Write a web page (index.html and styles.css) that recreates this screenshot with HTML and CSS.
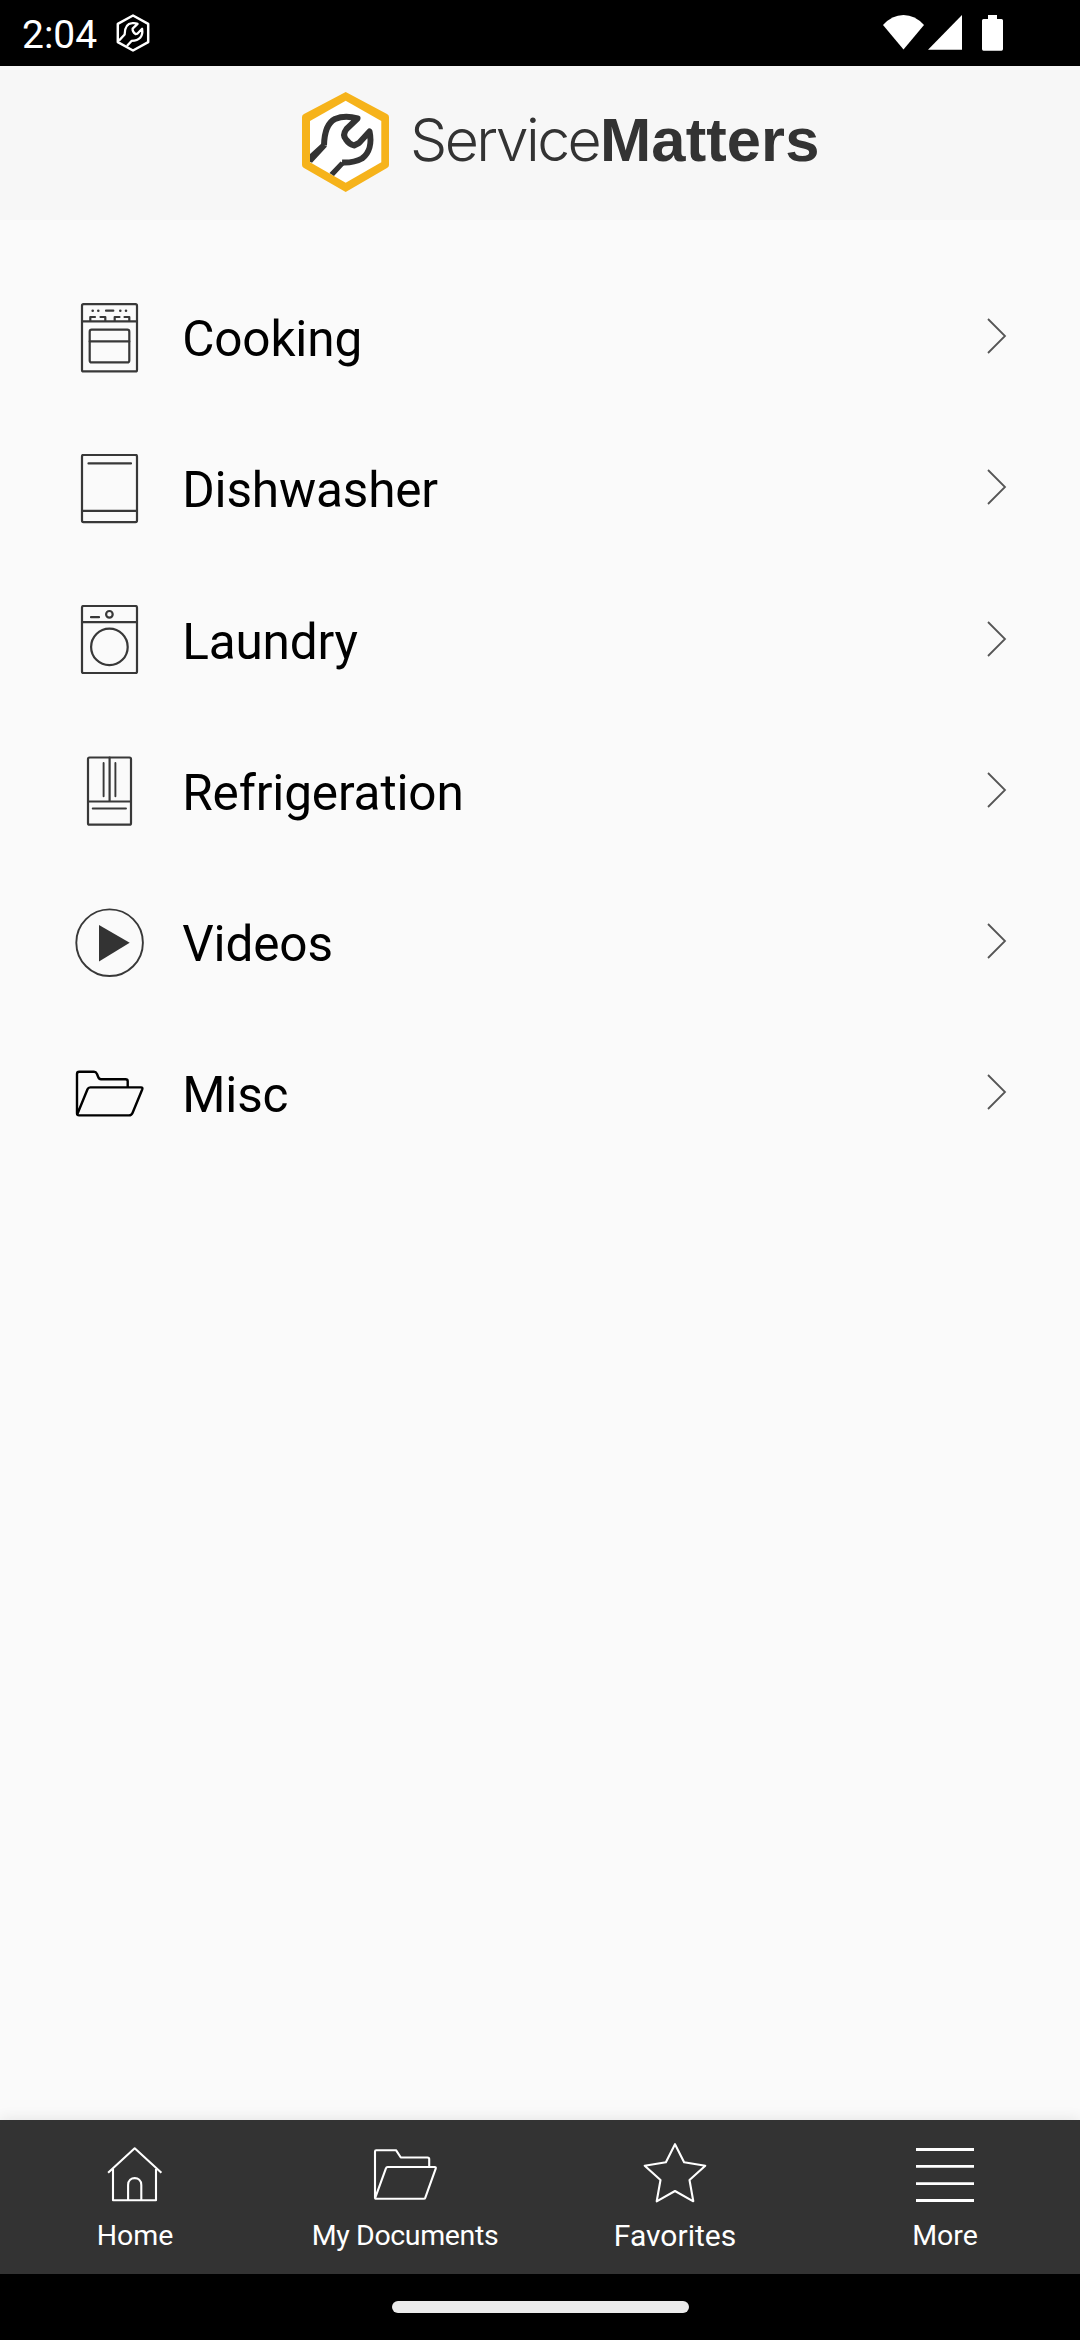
FILE: index.html
```html
<!DOCTYPE html>
<html lang="en">
<head>
<meta charset="utf-8">
<title>ServiceMatters</title>
<link rel="stylesheet" href="styles.css">
</head>
<body>
<div class="app">
  <div class="status">
    <span class="time">2:04</span>
    <svg class="status-logo" viewBox="0 0 88 100" fill="none" stroke="#fff" stroke-width="6.5" stroke-linejoin="round">
      <path d="M44 4 84 26V74L44 96 4 74V26Z"/>
      <path d="M7 70 22 54C22 38 28 25 42 24Q50 23 56 26L43 38.500Q42 47 50.700 53L56 51.500 68 39C71 58 62 70 40 71L28 84" stroke-width="6"/>
    </svg>
    <svg class="wifi" viewBox="0 0 41 35" fill="#fff"><path d="M0 10Q9 0 20.500 0T41 10L20.500 34.500Z"/></svg>
    <svg class="signal" viewBox="0 0 34 35" fill="#fff"><path d="M34 0V34.700H0Z"/></svg>
    <svg class="battery" viewBox="0 0 21 36" fill="#fff"><path d="M6 0H15V4H19.500Q21 4 21 5.500V34Q21 35.700 19.500 35.700H1.500Q0 35.700 0 34V5.500Q0 4 1.500 4H6Z"/></svg>
  </div>

  <header class="header">
    <svg class="logo" viewBox="0 0 88 100">
      <path d="M43.700 0 85 22Q87 23 87 25V73Q87 75 85 76L43.700 100 2 76Q0 75 0 73V25Q0 23 2 22Z" fill="#f6b31b"/>
      <path d="M43.700 8.700 79.300 29V70.300L43.700 90.700 8 70.300V29Z" fill="#fff"/>
      <path d="M8 69.800V62L19.500 51.500 25 54.500 10 70.800ZM27.500 81 38.500 69.500 43 72 32 84Z" fill="#333"/>
      <path d="M22 53.500C22.300 42 25 31 33 27Q43 22.800 55.500 26.500L44.500 37Q40 43 44 47.500 47 52 52 53.500L57 51 67.500 39.500C70 51 67.500 61 60 66.500Q52 71 40 70.500" fill="none" stroke="#333" stroke-width="6" stroke-linejoin="round"/>
    </svg>
    <div class="brand"><span class="brand-light">Service</span><span class="brand-bold">Matters</span></div>
  </header>

  <main class="list">
    <div class="row">
      <svg class="icon" viewBox="0 0 70 70"><rect x="7" y="1.200" width="55" height="67.200" rx="1.500"/><path d="M7 18.400H62M14.700 38.400H54.300M15.300 18V14H20M25.500 14H30.300V18M39.700 18V14H44.500M49.500 14H54.300V18M31 7.700H38.300"/><rect x="14.700" y="26.700" width="39.600" height="32.700" rx="2"/><path d="M17.700 7.700h.01M23.300 7.700h.01M45.300 7.700h.01M51 7.700h.01" stroke-width="2.600"/></svg>
      <span class="label">Cooking</span>
      <svg class="chevron" viewBox="0 0 20 36"><path d="M1 1 18 18 1 35"/></svg>
    </div>
    <div class="row">
      <svg class="icon" viewBox="0 0 70 70"><rect x="7" y=".9" width="55" height="67.200" rx="1.500"/><path d="M13.500 9.400H56M7 56.800H62"/></svg>
      <span class="label">Dishwasher</span>
      <svg class="chevron" viewBox="0 0 20 36"><path d="M1 1 18 18 1 35"/></svg>
    </div>
    <div class="row">
      <svg class="icon" viewBox="0 0 70 70"><rect x="7" y="1" width="55" height="67" rx="1.500"/><path d="M7 17.200H62M16 12.200H24"/><circle cx="34.400" cy="9.300" r="3.300"/><circle cx="34.400" cy="41.900" r="18.300"/></svg>
      <span class="label">Laundry</span>
      <svg class="chevron" viewBox="0 0 20 36"><path d="M1 1 18 18 1 35"/></svg>
    </div>
    <div class="row">
      <svg class="icon" viewBox="0 0 70 70"><rect x="13" y="1.500" width="43" height="67.200" rx="1.500"/><path d="M13 45.500H56M34.600 1.500V45.500"/><path d="M28.600 7V40.300M40.400 7V40.300M17.700 52.500H51" stroke-width="1.900"/></svg>
      <span class="label">Refrigeration</span>
      <svg class="chevron" viewBox="0 0 20 36"><path d="M1 1 18 18 1 35"/></svg>
    </div>
    <div class="row">
      <svg class="icon" viewBox="0 0 70 70"><circle cx="34.600" cy="34.700" r="33.300" stroke-width="1.900"/><path d="M24 17 54.700 34.700 24 53.400Z" fill="#333" stroke="none"/></svg>
      <span class="label">Videos</span>
      <svg class="chevron" viewBox="0 0 20 36"><path d="M1 1 18 18 1 35"/></svg>
    </div>
    <div class="row">
      <svg class="icon icon-dark" viewBox="0 0 70 70"><path d="M2 54.500V15Q2 12.800 4.200 12.800H19Q21 12.800 22 15L23.200 18Q24 20.200 26 20.200H50.500Q52.700 20.200 52.700 22.300V28.400M2.600 54.500 12.500 30.300Q13.300 28.400 15.300 28.400H66Q68 28.400 67.200 30.500L57.500 54Q56.500 56.400 54 56.400H4Q2 56.400 2 54.500"/></svg>
      <span class="label">Misc</span>
      <svg class="chevron" viewBox="0 0 20 36"><path d="M1 1 18 18 1 35"/></svg>
    </div>
  </main>

  <nav class="tabs">
    <div class="tab">
      <svg class="tab-icon" viewBox="0 0 70 70"><path d="M8.100 30.700 34.700 6.300 61.400 30.700M13 27V58.300H56V27M28.100 58.300V43C28.100 33.800 41.300 33.800 41.300 43V58.300"/></svg>
      <span>Home</span>
    </div>
    <div class="tab tab-documents">
      <svg class="tab-icon" viewBox="0 0 70 70"><path d="M5 55.700V9.500Q5 8.200 6.200 8.200H26L30.800 15.500H57.500Q59.200 15.500 59.200 17V24.800M5.300 55.700 16 26.200Q16.400 25 17.600 25H64.500Q66.300 25 65.700 26.700L55.300 55.700Q55 56.800 53.800 56.800H6Q5 56.800 5 55.700"/></svg>
      <span>My Documents</span>
    </div>
    <div class="tab tab-favorites">
      <svg class="tab-icon" viewBox="0 0 70 70"><path d="M35 2.200 44.100 20.300 65.300 23.700 49.500 38 53.300 59.300 35 49 16.700 59.300 20.500 38 4.700 23.700 25.900 20.300Z"/></svg>
      <span>Favorites</span>
    </div>
    <div class="tab">
      <svg class="tab-icon" viewBox="0 0 70 70"><path d="M6 7.500H64M6 24.400H64M6 41.600H64M6 58.500H64" stroke-width="2.800"/></svg>
      <span>More</span>
    </div>
  </nav>
  <div class="gesture"><div class="pill"></div></div>
</div>
</body>
</html>
```
FILE: styles.css
```css
* { box-sizing: border-box; }
body {
  margin: 0;
  background: #fafafa;
  font-family: Roboto, "Noto Sans", sans-serif;
}
svg { display: block; flex: none; }
.app {
  width: 1080px;
  height: 2340px;
  display: flex;
  flex-direction: column;
}

.status {
  height: 66px;
  background: #000;
  color: #fff;
  display: flex;
  align-items: flex-start;
  padding: 14px 77px 0 22px;
}
.time {
  font-size: 39px;
  line-height: 46px;
  margin-top: -2px;
  width: 94px;
}
.status-logo { width: 34px; height: 38px; }
.wifi { width: 41px; height: 35px; margin: 1px 4px 0 auto; }
.signal { width: 34px; height: 35px; margin: 1px 20px 0 0; }
.battery { width: 21px; height: 36px; margin-top: 1px; }

.header {
  height: 154px;
  background: #f7f7f7;
  display: flex;
  align-items: flex-start;
  padding: 26px 0 0 302px;
}
.logo { width: 88px; height: 100px; }
.brand {
  display: flex;
  align-items: baseline;
  margin: 13px 0 0 20px;
  color: #333;
  line-height: 70px;
}
.brand-light {
  font-family: Inter, "Liberation Sans", sans-serif;
  font-weight: 300;
  font-size: 59px;
  letter-spacing: -2.6px;
  width: 190px;
}
.brand-bold {
  font-family: "Liberation Sans", Arial, sans-serif;
  font-weight: 700;
  font-size: 61.5px;
  letter-spacing: .1px;
}

.list { flex: 1; padding-top: 42px; }
.row {
  height: 151.25px;
  display: flex;
  align-items: center;
  padding: 0 73px 0 75px;
}
.icon {
  width: 70px;
  height: 70px;
  fill: none;
  stroke: #383838;
  stroke-width: 2.2;
  stroke-linecap: round;
  stroke-linejoin: round;
}
.icon-dark { stroke: #000; stroke-width: 2.4; }
.label {
  flex: 1;
  margin-left: 37.2px;
  padding-top: 3px;
  font-size: 49.5px;
  line-height: 58px;
  letter-spacing: -.15px;
  color: #000;
}
.chevron {
  width: 20px;
  height: 36px;
  margin: 0 0 3px;
  fill: none;
  stroke: #555;
  stroke-width: 1.800;
}

.tabs {
  height: 154px;
  background: #333;
  box-shadow: 0 0 14px rgba(0, 0, 0, .1);
  display: grid;
  grid-template-columns: repeat(4, 270px);
}
.tab {
  display: flex;
  flex-direction: column;
  align-items: center;
  padding-top: 22px;
  color: #fff;
  font-size: 28.500px;
  line-height: 34px;
}
.tab span { margin-top: 7px; }
.tab-documents { letter-spacing: -.35px; }
.tab-favorites { font-size: 30px; }
.tab-icon {
  width: 70px;
  height: 70px;
  fill: none;
  stroke: #fff;
  stroke-width: 2.1;
  stroke-linejoin: round;
}

.gesture {
  height: 66px;
  background: #000;
  display: flex;
  justify-content: center;
  align-items: flex-start;
  padding-top: 27px;
}
.pill {
  width: 297px;
  height: 12px;
  border-radius: 6px;
  background: #ebebeb;
}
```
